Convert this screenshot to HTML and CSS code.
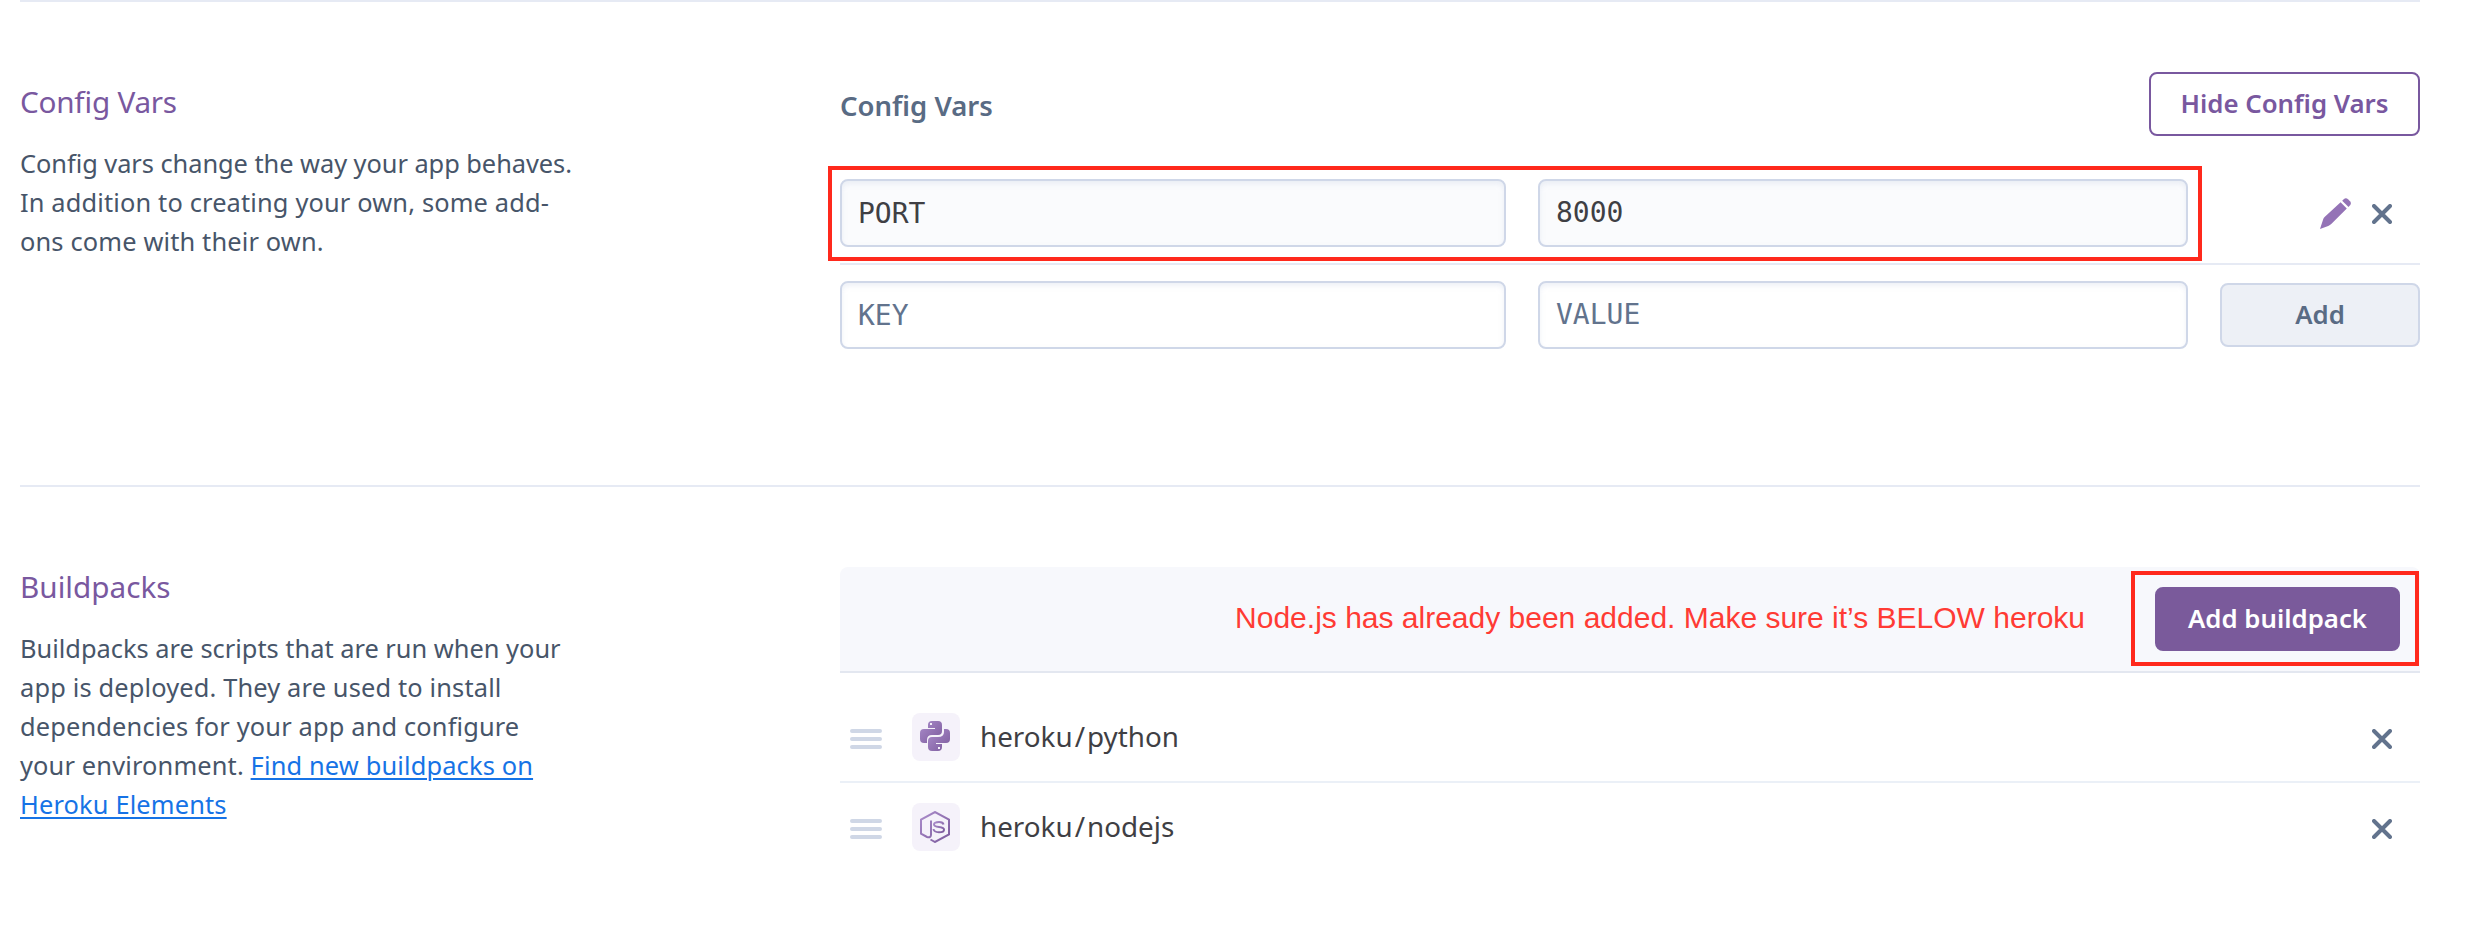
FILE: index.html
```html
<!DOCTYPE html>
<html lang="en">
<head>
<meta charset="utf-8">
<title>Settings</title>
<link rel="stylesheet" href="styles.css">
</head>
<body>
<svg class="defs" width="0" height="0" aria-hidden="true">
  <defs>
    <linearGradient id="purple" x1="0" y1="0" x2="1" y2="1"><stop offset="0" stop-color="#ab8dcb"/><stop offset="1" stop-color="#7b5a9c"/></linearGradient>
    <symbol id="close" viewBox="0 0 20 20"><path d="M2 2L18 18M18 2L2 18" stroke="#62738d" stroke-width="4" stroke-linecap="round"/></symbol>
    <symbol id="grip" viewBox="0 0 32 20"><path d="M2 2H30M2 10H30M2 18H30" stroke="#cfd7e6" stroke-width="4" stroke-linecap="round"/></symbol>
  </defs>
</svg>
<main class="page">
  <section class="section">
    <div class="intro">
      <h2 class="title tight">Config Vars</h2>
      <p class="copy"><span class="tight">Config vars change the way your app behaves.</span><br>In addition to creating your own, some add-<br>ons come with their own.</p>
    </div>
    <div class="content vars">
      <div class="vars-head">
        <h3 class="subtitle">Config Vars</h3>
        <button class="btn outline">Hide Config Vars</button>
      </div>
      <div class="var-row saved">
        <div class="field filled">PORT</div>
        <div class="field filled value">8000</div>
        <div class="actions">
          <svg class="pencil" viewBox="0 0 32 32"><path d="M0 31L3.2 21.3Q3.6 20 4.6 19L20.6 4.2L26.800 10.400L11.500 25.800Q10 27.300 8.200 28Z" fill="#9473b6"/><path d="M22.200 2.700L24 1Q26-.6 28.300 1.500L30 3.300Q31.600 5 30.300 6.900L28.500 8.900Z" fill="#9473b6"/></svg>
          <svg class="x"><use href="#close"/></svg>
        </div>
        <div class="marker vars-marker"></div>
      </div>
      <div class="var-row">
        <div class="field">KEY</div>
        <div class="field value">VALUE</div>
        <button class="btn add">Add</button>
      </div>
    </div>
  </section>
  <section class="section">
    <div class="intro">
      <h2 class="title">Buildpacks</h2>
      <p class="copy"><span class="even">Buildpacks are scripts that are run when your</span><br>app is deployed. They are used to install<br>dependencies for your app and configure<br>your environment. <a class="link" href="#">Find new buildpacks on<br>Heroku Elements</a></p>
    </div>
    <div class="content">
      <div class="banner">
        <span class="note">Node.js has already been added. Make sure it’s BELOW heroku</span>
        <button class="btn primary">Add buildpack</button>
        <div class="marker banner-marker"></div>
      </div>
      <div class="pack first">
        <svg class="grip"><use href="#grip"/></svg>
        <span class="tile"><svg width="30" height="30" viewBox="0 0 30 30"><path fill="url(#purple)" fill-rule="evenodd" d="M12 0H18Q22 0 22 4V10Q22 14 18 14H12Q7 14 7 19V22H4Q0 22 0 18V12Q0 8 4 8H15V7H8V4Q8 0 12 0ZM10 2V4H12V2Z"/><path fill="url(#purple)" fill-rule="evenodd" d="M18 30H12Q8 30 8 26V20Q8 16 12 16H18Q24 16 24 11V8H26Q30 8 30 12V18Q30 22 26 22H16V23H22V26Q22 30 18 30ZM18 26V28H20V26Z"/></svg></span>
        <span class="name">heroku<span class="slash">/</span>python</span>
        <svg class="x"><use href="#close"/></svg>
      </div>
      <div class="pack">
        <svg class="grip"><use href="#grip"/></svg>
        <span class="tile"><svg width="30" height="32" viewBox="0 0 30 32" fill="none" stroke="url(#purple)" stroke-width="2"><path d="M11 9.500V23.500Q11 26.500 8 26.300L7 26L1 22.700V8.700L15 1L29 8.700V23.300L15 31L10.500 28.500"/><path d="M23.500 13.500Q23 11 19 11Q14 11 14 13.500Q14 15.500 19 16Q24 16.500 24 18.700Q24 21.200 19 21.200Q13.800 21.200 13.500 18"/></svg></span>
        <span class="name">heroku<span class="slash">/</span>nodejs</span>
        <svg class="x"><use href="#close"/></svg>
      </div>
    </div>
  </section>
</main>
</body>
</html>
```
FILE: styles.css
```css
* { box-sizing: border-box; }
body { margin: 0; background: #fff; font-family: "Noto Sans", sans-serif; }
.defs { display: block; height: 0; }
.page { width: 2400px; margin-left: 20px; }
.section { display: grid; grid-template-columns: 820px 1580px; height: 485px; border-top: 2px solid #e6eaf4; }
.section + .section { height: 400px; }
h2, h3, p { margin: 0; font-weight: 400; }
.intro { padding-top: 80px; }
.title { font-size: 29.7px; line-height: 40px; color: #79589f; }
.copy { margin-top: 22px; font-size: 25.4px; line-height: 39px; letter-spacing: .15px; color: #475569; white-space: nowrap; font-feature-settings: "liga" 1; }
.tight { letter-spacing: -.05px; font-feature-settings: "liga" 1; }
.title.tight { letter-spacing: -.25px; }
.even { letter-spacing: 0; }
.link { color: #1673e6; text-decoration: underline; text-decoration-thickness: 2px; text-underline-offset: 3px; }
.content { padding-top: 80px; }
.vars { padding-top: 70px; }
.vars-head { display: flex; justify-content: space-between; height: 64px; }
.subtitle { font-size: 27.5px; line-height: 40px; padding-top: 14px; font-weight: 600; color: #596b84; }
.btn { display: flex; align-items: center; justify-content: center; height: 64px; padding: 0 0 2px; border: 2px solid; border-radius: 8px; font: 600 25.8px/40px "Noto Sans", sans-serif; white-space: nowrap; }
.outline { width: 271px; color: #79589f; border-color: #79589f; background: #fff; }
.var-row { position: relative; display: grid; grid-template-columns: 666px 650px 200px; column-gap: 32px; align-items: center; height: 100px; }
.saved { margin-top: 27px; height: 102px; border-bottom: 2px solid #e6eaf4; }
.field { height: 68px; border: 2px solid #cfd7e8; border-radius: 8px; padding-left: 16px; font: 28px/66px "DejaVu Sans Mono", monospace; color: #62738d; background: #fff; box-shadow: inset 0 3px 5px rgba(207, 215, 232, .35); }
.filled { background: #fafbfd; color: #3f3f44; }
.value { line-height: 64px; }
.actions { display: flex; align-items: center; gap: 20px; padding: 2px 0 0 100px; }
.pencil { width: 32px; height: 32px; }
.x { width: 20px; height: 20px; }
.add { width: 200px; color: #596b84; border-color: #cfd7e8; background: #edf0f6; }
.marker { position: absolute; border: 4px solid #ff291c; }
.vars-marker { left: -12px; top: 3px; width: 1374px; height: 95px; }
.banner { position: relative; display: flex; align-items: center; justify-content: flex-end; height: 106px; padding: 0 20px 0 0; border-bottom: 2px solid #e3e7f0; border-radius: 8px 8px 0 0; background: #f7f8fc; }
.note { margin: 0 70px 2px 0; font: 30px/40px "Liberation Sans", sans-serif; color: #ff3b34; white-space: nowrap; }
.primary { width: 245px; color: #fff; border-color: #7a5a9b; background: #7a5a9b; }
.banner-marker { left: 1291px; top: 4px; width: 288px; height: 95px; }
.pack { display: flex; align-items: center; height: 88px; padding: 0 28px 0 10px; }
.first { height: 110px; padding-top: 20px; border-bottom: 2px solid #ebf0f7; }
.grip { width: 32px; height: 20px; margin: 4px 30px 0 0; }
.pack .x { margin-top: 4px; }
.tile { width: 48px; height: 48px; padding: 8px; border-radius: 8px; background: #f5f2fa; }
.tile svg { display: block; }
.name { flex: 1; margin: 0 0 2px 20px; font-size: 27.8px; line-height: 40px; color: #3f3f44; }
.slash { margin: 0 2px; }
```
